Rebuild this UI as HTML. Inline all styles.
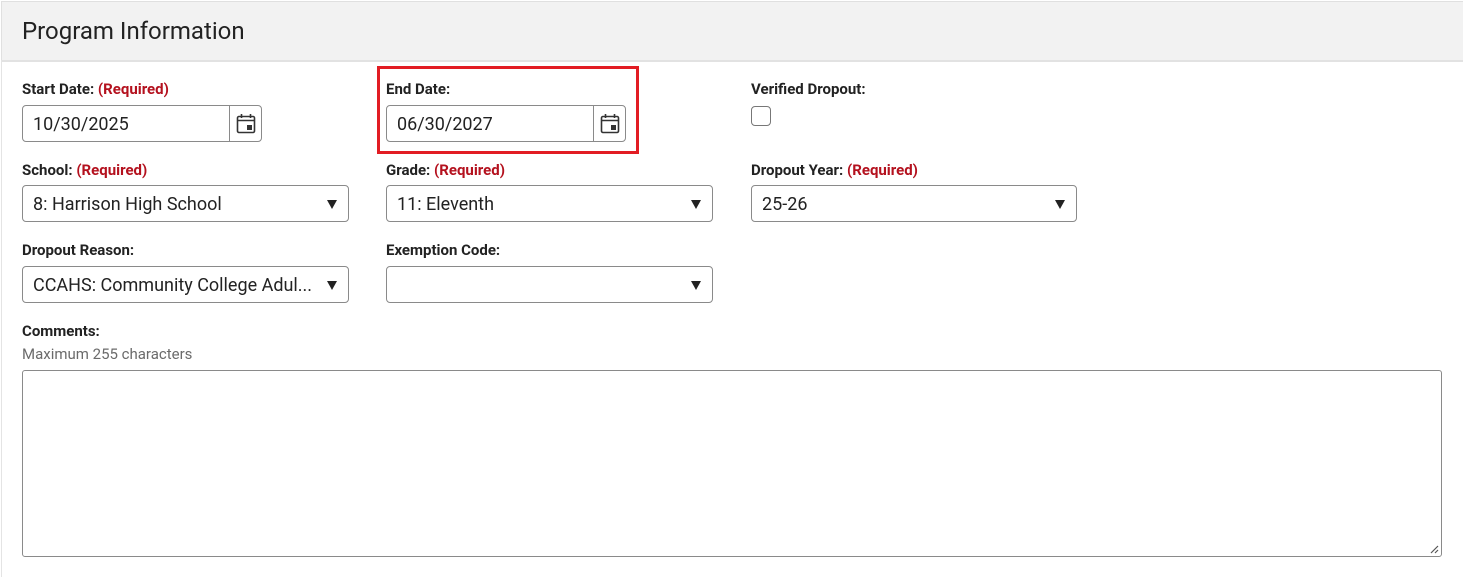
<!DOCTYPE html>
<html><head><style>
body{margin:0;width:1463px;height:577px;background:#fff;position:relative;overflow:hidden;font-family:"Roboto","Liberation Sans",Arial,sans-serif;color:#222}
.a{position:absolute}
.hdr{left:1px;top:1px;width:1470px;height:58px;background:#f2f2f2;border-top:1px solid #e0e0e0;border-left:1px solid #e0e0e0;border-bottom:2px solid #e2e2e2}
.lborder{left:1px;top:60px;width:1px;height:517px;background:#e4e4e4}
.ttl{left:22px;top:17px;font-size:24px;color:#222}
.lbl{font-size:15px;font-weight:bold;color:#222;letter-spacing:0}
.req{color:#b4111e}
.box{border:1px solid #8a8a8a;border-radius:4px;background:#fff;box-sizing:border-box;height:37px;font-size:18px;line-height:37px;padding-left:10px;color:#222}
.cal{position:absolute;right:0;top:0;width:31px;height:35px;border-left:1px solid #8a8a8a}
.arr{position:absolute;right:11px;top:14px;width:0;height:0;border-left:5.5px solid transparent;border-right:5.5px solid transparent;border-top:9px solid #222}
</style></head><body>
<div class="a hdr"></div>
<div class="a lborder"></div>
<div class="a ttl">Program Information</div>

<div class="a lbl" style="left:22px;top:80px">Start Date: <span class="req">(Required)</span></div>
<div class="a box" style="left:22px;top:105px;width:240px">10/30/2025<div class="cal"><svg width="31" height="35" viewBox="0 0 31 35"><rect x="7.5" y="10.5" width="17" height="16" rx="1.5" fill="none" stroke="#333" stroke-width="1.6"/><line x1="7.5" y1="14.5" x2="24.5" y2="14.5" stroke="#333" stroke-width="1.6"/><line x1="11.5" y1="8" x2="11.5" y2="12" stroke="#333" stroke-width="1.6"/><line x1="20.5" y1="8" x2="20.5" y2="12" stroke="#333" stroke-width="1.6"/><rect x="17" y="19" width="5" height="5" fill="#333"/></svg></div></div>

<div class="a" style="left:377px;top:66px;width:256px;height:82px;border:3px solid #e21c23"></div>
<div class="a lbl" style="left:386px;top:80px">End Date:</div>
<div class="a box" style="left:386px;top:105px;width:240px">06/30/2027<div class="cal"><svg width="31" height="35" viewBox="0 0 31 35"><rect x="7.5" y="10.5" width="17" height="16" rx="1.5" fill="none" stroke="#333" stroke-width="1.6"/><line x1="7.5" y1="14.5" x2="24.5" y2="14.5" stroke="#333" stroke-width="1.6"/><line x1="11.5" y1="8" x2="11.5" y2="12" stroke="#333" stroke-width="1.6"/><line x1="20.5" y1="8" x2="20.5" y2="12" stroke="#333" stroke-width="1.6"/><rect x="17" y="19" width="5" height="5" fill="#333"/></svg></div></div>

<div class="a lbl" style="left:751px;top:80px">Verified Dropout:</div>
<div class="a" style="left:751px;top:106px;width:20px;height:20px;border:1px solid #777;border-radius:4px;box-sizing:border-box"></div>

<div class="a lbl" style="left:22px;top:161px">School: <span class="req">(Required)</span></div>
<div class="a box" style="left:22px;top:185px;width:327px">8: Harrison High School<div class="arr"></div></div>
<div class="a lbl" style="left:386px;top:161px">Grade: <span class="req">(Required)</span></div>
<div class="a box" style="left:386px;top:185px;width:327px">11: Eleventh<div class="arr"></div></div>
<div class="a lbl" style="left:751px;top:161px">Dropout Year: <span class="req">(Required)</span></div>
<div class="a box" style="left:751px;top:185px;width:326px">25-26<div class="arr"></div></div>

<div class="a lbl" style="left:22px;top:241px">Dropout Reason:</div>
<div class="a box" style="left:22px;top:266px;width:327px">CCAHS: Community College Adul...<div class="arr"></div></div>
<div class="a lbl" style="left:386px;top:241px">Exemption Code:</div>
<div class="a box" style="left:386px;top:266px;width:327px"><div class="arr"></div></div>

<div class="a lbl" style="left:22px;top:322px">Comments:</div>
<div class="a" style="left:22px;top:345px;font-size:15px;color:#6b6b6b">Maximum 255 characters</div>
<div class="a" style="left:22px;top:370px;width:1420px;height:187px;border:1px solid #8a8a8a;border-radius:3px;box-sizing:border-box">
<svg class="a" style="right:2px;bottom:2px" width="10" height="10" viewBox="0 0 10 10"><line x1="9" y1="2" x2="2" y2="9" stroke="#555" stroke-width="1.2"/><line x1="9" y1="6" x2="6" y2="9" stroke="#555" stroke-width="1.2"/></svg>
</div>
</body></html>
